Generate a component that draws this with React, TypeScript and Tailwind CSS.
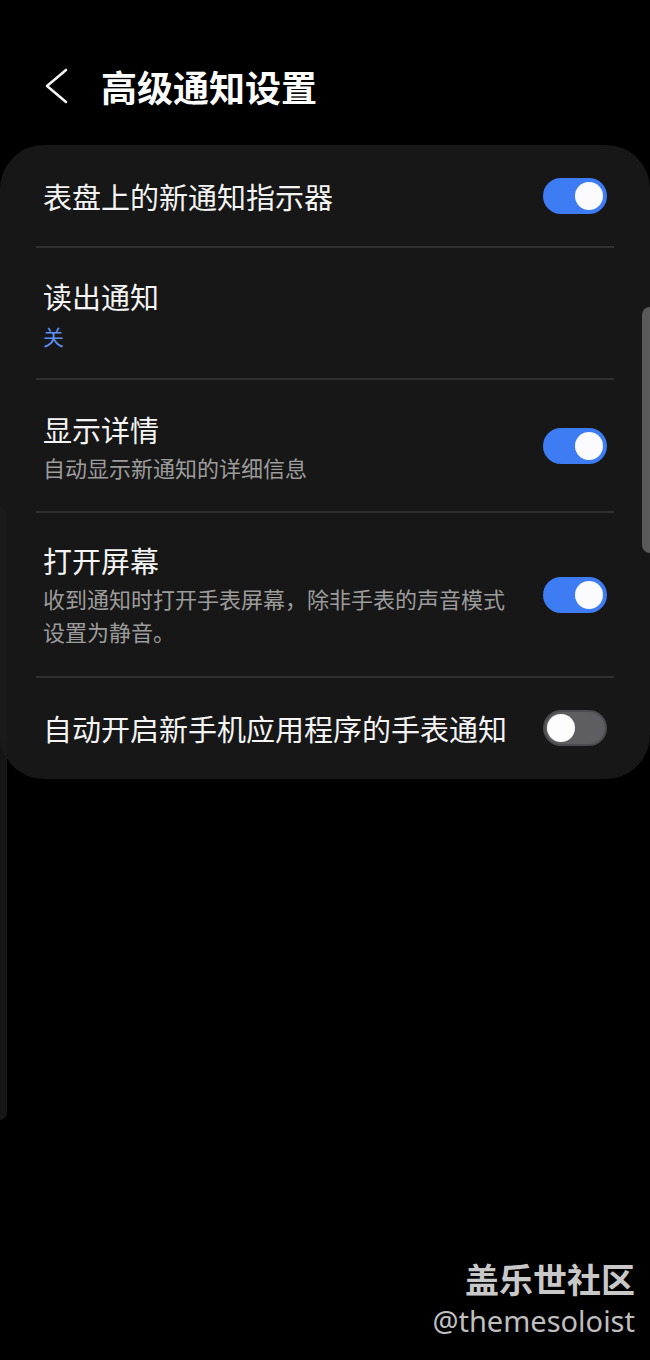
import React from 'react';

const font = { fontFamily: '"Noto Sans CJK SC", "Noto Sans", sans-serif' };

const Toggle = ({ on }: { on: boolean }) =>
  on ? (
    <div className="flex h-[36px] w-[64px] shrink-0 items-center justify-end rounded-full bg-[#3d7cf2] pr-[4px]">
      <div className="h-[28px] w-[28px] rounded-full bg-[#fbfbff]" />
    </div>
  ) : (
    <div className="flex h-[36px] w-[64px] shrink-0 items-center justify-start rounded-full border-2 border-[#4b4b4e] bg-[#5e5e62] pl-[2px]">
      <div className="h-[28px] w-[28px] rounded-full bg-[#fdfdfd]" />
    </div>
  );

const Divider = () => <div className="h-[2px] bg-[#303030]" />;

const App = () => {
  return (
    <div
      className="relative h-[1360px] w-[650px] overflow-hidden bg-black text-[#f4f4f4]"
      style={font}
    >
      {/* header */}
      <div className="mt-[58px] mb-[31px] flex h-[56px] items-center pl-[44px]">
        <svg width="26" height="36" viewBox="0 0 26 36" fill="none">
          <path
            d="M22 2 L3 18 L22 34"
            stroke="#f4f4f4"
            strokeWidth="2.6"
            strokeLinecap="round"
            strokeLinejoin="round"
          />
        </svg>
        <h1 className="ml-[31px] text-[36px] leading-none font-bold text-white">
          高级通知设置
        </h1>
      </div>

      {/* settings card */}
      <div className="rounded-[44px] bg-[#171717] px-[36px]">
        <div className="flex h-[101px] items-center justify-between pr-[7px] pl-[7px]">
          <div className="text-[29px] leading-[40px]">表盘上的新通知指示器</div>
          <Toggle on />
        </div>
        <Divider />

        <div className="flex h-[130px] flex-col pt-[28px] pl-[7px]">
          <div className="text-[29px] leading-[40px]">读出通知</div>
          <div className="mt-[5px] text-[21px] leading-[30px] text-[#5d8ff2]">关</div>
        </div>
        <Divider />

        <div className="flex h-[131px] items-center justify-between pr-[7px] pl-[7px]">
          <div className="flex flex-col pb-[1px]">
            <div className="text-[29px] leading-[40px]">显示详情</div>
            <div className="mt-[3px] text-[22px] leading-[30px] text-[#9c9c9c]">
              自动显示新通知的详细信息
            </div>
          </div>
          <Toggle on />
        </div>
        <Divider />

        <div className="flex h-[163px] items-center justify-between pr-[7px] pl-[7px]">
          <div className="flex flex-col pb-[2px]">
            <div className="text-[29px] leading-[40px]">打开屏幕</div>
            <div className="mt-[2px] w-[470px] text-[22px] leading-[33px] text-[#9c9c9c]">
              收到通知时打开手表屏幕，除非手表的声音模式设置为静音。
            </div>
          </div>
          <Toggle on />
        </div>
        <Divider />

        <div className="flex h-[101px] items-center justify-between pr-[7px] pl-[7px] pb-[1px]">
          <div className="text-[29px] leading-[40px]">自动开启新手机应用程序的手表通知</div>
          <Toggle on={false} />
        </div>
      </div>

      {/* scroll indicators */}
      <div className="absolute top-[307px] right-0 h-[246px] w-[8px] rounded-l-full bg-[#5a5a5a]" />
      <div className="absolute top-[507px] left-0 h-[613px] w-[7px] rounded-r-full bg-[#1c1c1c] opacity-80" />

      {/* watermark */}
      <div className="absolute right-[15px] bottom-[19px] flex flex-col items-end">
        <div className="text-[34px] leading-[44px] font-bold text-[#c8c8c8]">盖乐世社区</div>
        <div
          className="text-[29px] leading-[40px] text-[#bebebe]"
          style={{ fontFamily: '"Noto Sans", sans-serif' }}
        >
          @themesoloist
        </div>
      </div>
    </div>
  );
};

export default App;
